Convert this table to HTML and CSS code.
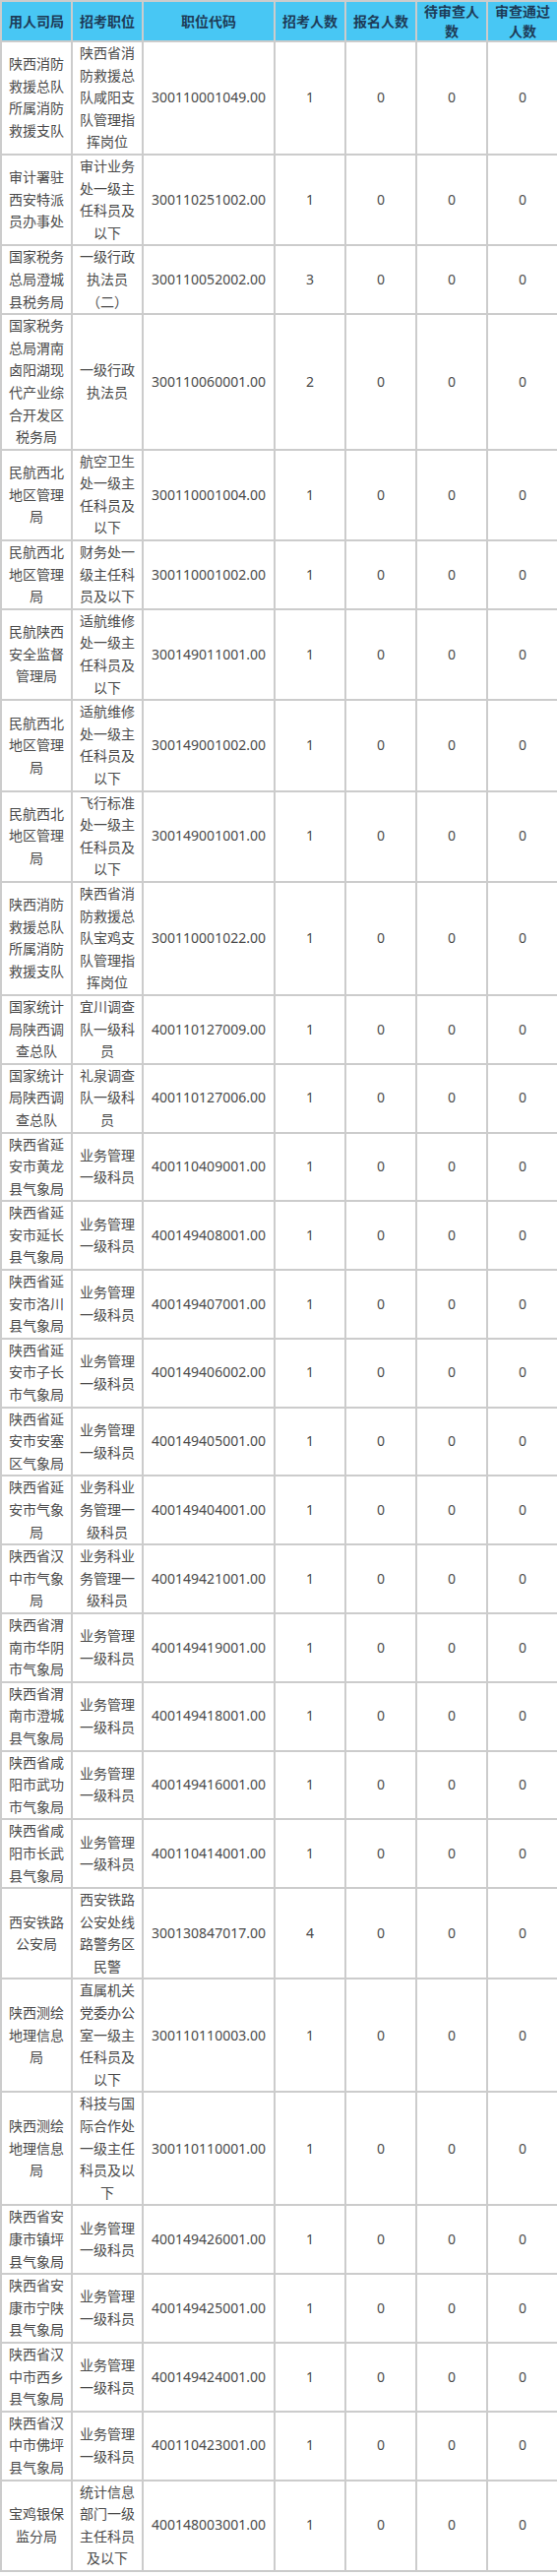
FILE: index.html
```html
<!DOCTYPE html>
<html lang="zh-CN">
<head>
<meta charset="utf-8">
<title>职位报名情况</title>
<link rel="stylesheet" href="styles.css">
</head>
<body>
<table class="tbl">
  <colgroup>
    <col class="c-org"><col class="c-pos"><col class="c-code"><col class="c-num"><col class="c-num"><col class="c-num"><col class="c-num">
  </colgroup>
  <thead>
    <tr><th>用人司局</th><th>招考职位</th><th>职位代码</th><th>招考人数</th><th>报名人数</th><th>待审查人数</th><th>审查通过人数</th></tr>
  </thead>
  <tbody>
    <tr><td>陕西消防救援总队所属消防救援支队</td><td>陕西省消防救援总队咸阳支队管理指挥岗位</td><td>300110001049.00</td><td>1</td><td>0</td><td>0</td><td>0</td></tr>
    <tr><td>审计署驻西安特派员办事处</td><td>审计业务处一级主任科员及以下</td><td>300110251002.00</td><td>1</td><td>0</td><td>0</td><td>0</td></tr>
    <tr><td>国家税务总局澄城县税务局</td><td>一级行政执法员（二）</td><td>300110052002.00</td><td>3</td><td>0</td><td>0</td><td>0</td></tr>
    <tr><td>国家税务总局渭南卤阳湖现代产业综合开发区税务局</td><td>一级行政执法员</td><td>300110060001.00</td><td>2</td><td>0</td><td>0</td><td>0</td></tr>
    <tr><td>民航西北地区管理局</td><td>航空卫生处一级主任科员及以下</td><td>300110001004.00</td><td>1</td><td>0</td><td>0</td><td>0</td></tr>
    <tr><td>民航西北地区管理局</td><td>财务处一级主任科员及以下</td><td>300110001002.00</td><td>1</td><td>0</td><td>0</td><td>0</td></tr>
    <tr><td>民航陕西安全监督管理局</td><td>适航维修处一级主任科员及以下</td><td>300149011001.00</td><td>1</td><td>0</td><td>0</td><td>0</td></tr>
    <tr><td>民航西北地区管理局</td><td>适航维修处一级主任科员及以下</td><td>300149001002.00</td><td>1</td><td>0</td><td>0</td><td>0</td></tr>
    <tr><td>民航西北地区管理局</td><td>飞行标准处一级主任科员及以下</td><td>300149001001.00</td><td>1</td><td>0</td><td>0</td><td>0</td></tr>
    <tr><td>陕西消防救援总队所属消防救援支队</td><td>陕西省消防救援总队宝鸡支队管理指挥岗位</td><td>300110001022.00</td><td>1</td><td>0</td><td>0</td><td>0</td></tr>
    <tr><td>国家统计局陕西调查总队</td><td>宜川调查队一级科员</td><td>400110127009.00</td><td>1</td><td>0</td><td>0</td><td>0</td></tr>
    <tr><td>国家统计局陕西调查总队</td><td>礼泉调查队一级科员</td><td>400110127006.00</td><td>1</td><td>0</td><td>0</td><td>0</td></tr>
    <tr><td>陕西省延安市黄龙县气象局</td><td>业务管理一级科员</td><td>400110409001.00</td><td>1</td><td>0</td><td>0</td><td>0</td></tr>
    <tr><td>陕西省延安市延长县气象局</td><td>业务管理一级科员</td><td>400149408001.00</td><td>1</td><td>0</td><td>0</td><td>0</td></tr>
    <tr><td>陕西省延安市洛川县气象局</td><td>业务管理一级科员</td><td>400149407001.00</td><td>1</td><td>0</td><td>0</td><td>0</td></tr>
    <tr><td>陕西省延安市子长市气象局</td><td>业务管理一级科员</td><td>400149406002.00</td><td>1</td><td>0</td><td>0</td><td>0</td></tr>
    <tr><td>陕西省延安市安塞区气象局</td><td>业务管理一级科员</td><td>400149405001.00</td><td>1</td><td>0</td><td>0</td><td>0</td></tr>
    <tr><td>陕西省延安市气象局</td><td>业务科业务管理一级科员</td><td>400149404001.00</td><td>1</td><td>0</td><td>0</td><td>0</td></tr>
    <tr><td>陕西省汉中市气象局</td><td>业务科业务管理一级科员</td><td>400149421001.00</td><td>1</td><td>0</td><td>0</td><td>0</td></tr>
    <tr><td>陕西省渭南市华阴市气象局</td><td>业务管理一级科员</td><td>400149419001.00</td><td>1</td><td>0</td><td>0</td><td>0</td></tr>
    <tr><td>陕西省渭南市澄城县气象局</td><td>业务管理一级科员</td><td>400149418001.00</td><td>1</td><td>0</td><td>0</td><td>0</td></tr>
    <tr><td>陕西省咸阳市武功市气象局</td><td>业务管理一级科员</td><td>400149416001.00</td><td>1</td><td>0</td><td>0</td><td>0</td></tr>
    <tr><td>陕西省咸阳市长武县气象局</td><td>业务管理一级科员</td><td>400110414001.00</td><td>1</td><td>0</td><td>0</td><td>0</td></tr>
    <tr><td>西安铁路公安局</td><td>西安铁路公安处线路警务区民警</td><td>300130847017.00</td><td>4</td><td>0</td><td>0</td><td>0</td></tr>
    <tr><td>陕西测绘地理信息局</td><td>直属机关党委办公室一级主任科员及以下</td><td>300110110003.00</td><td>1</td><td>0</td><td>0</td><td>0</td></tr>
    <tr><td>陕西测绘地理信息局</td><td>科技与国际合作处一级主任科员及以下</td><td>300110110001.00</td><td>1</td><td>0</td><td>0</td><td>0</td></tr>
    <tr><td>陕西省安康市镇坪县气象局</td><td>业务管理一级科员</td><td>400149426001.00</td><td>1</td><td>0</td><td>0</td><td>0</td></tr>
    <tr><td>陕西省安康市宁陕县气象局</td><td>业务管理一级科员</td><td>400149425001.00</td><td>1</td><td>0</td><td>0</td><td>0</td></tr>
    <tr><td>陕西省汉中市西乡县气象局</td><td>业务管理一级科员</td><td>400149424001.00</td><td>1</td><td>0</td><td>0</td><td>0</td></tr>
    <tr><td>陕西省汉中市佛坪县气象局</td><td>业务管理一级科员</td><td>400110423001.00</td><td>1</td><td>0</td><td>0</td><td>0</td></tr>
    <tr><td>宝鸡银保监分局</td><td>统计信息部门一级主任科员及以下</td><td>400148003001.00</td><td>1</td><td>0</td><td>0</td><td>0</td></tr>
  </tbody>
</table>
</body>
</html>
```
FILE: styles.css
```css
html, body {
  margin: 0;
  padding: 0;
  background: #ffffff;
}

.tbl {
  width: 566px;
  table-layout: fixed;
  border-collapse: collapse;
  font-family: "Noto Sans", "Noto Sans CJK SC", sans-serif;
  font-size: 14px;
  color: #4a4a4a;
}

.c-org, .c-pos, .c-num { width: 72px; }
.c-code { width: 134px; }

.tbl th,
.tbl td {
  border: 2px solid #cccccc;
  text-align: center;
  vertical-align: middle;
  padding: 0 6px;
}

.tbl th {
  background: #48c7f4;
  color: #1d3b57;
  font-weight: 700;
  line-height: 19.5px;
}

.tbl td {
  line-height: 22.6px;
}
```
